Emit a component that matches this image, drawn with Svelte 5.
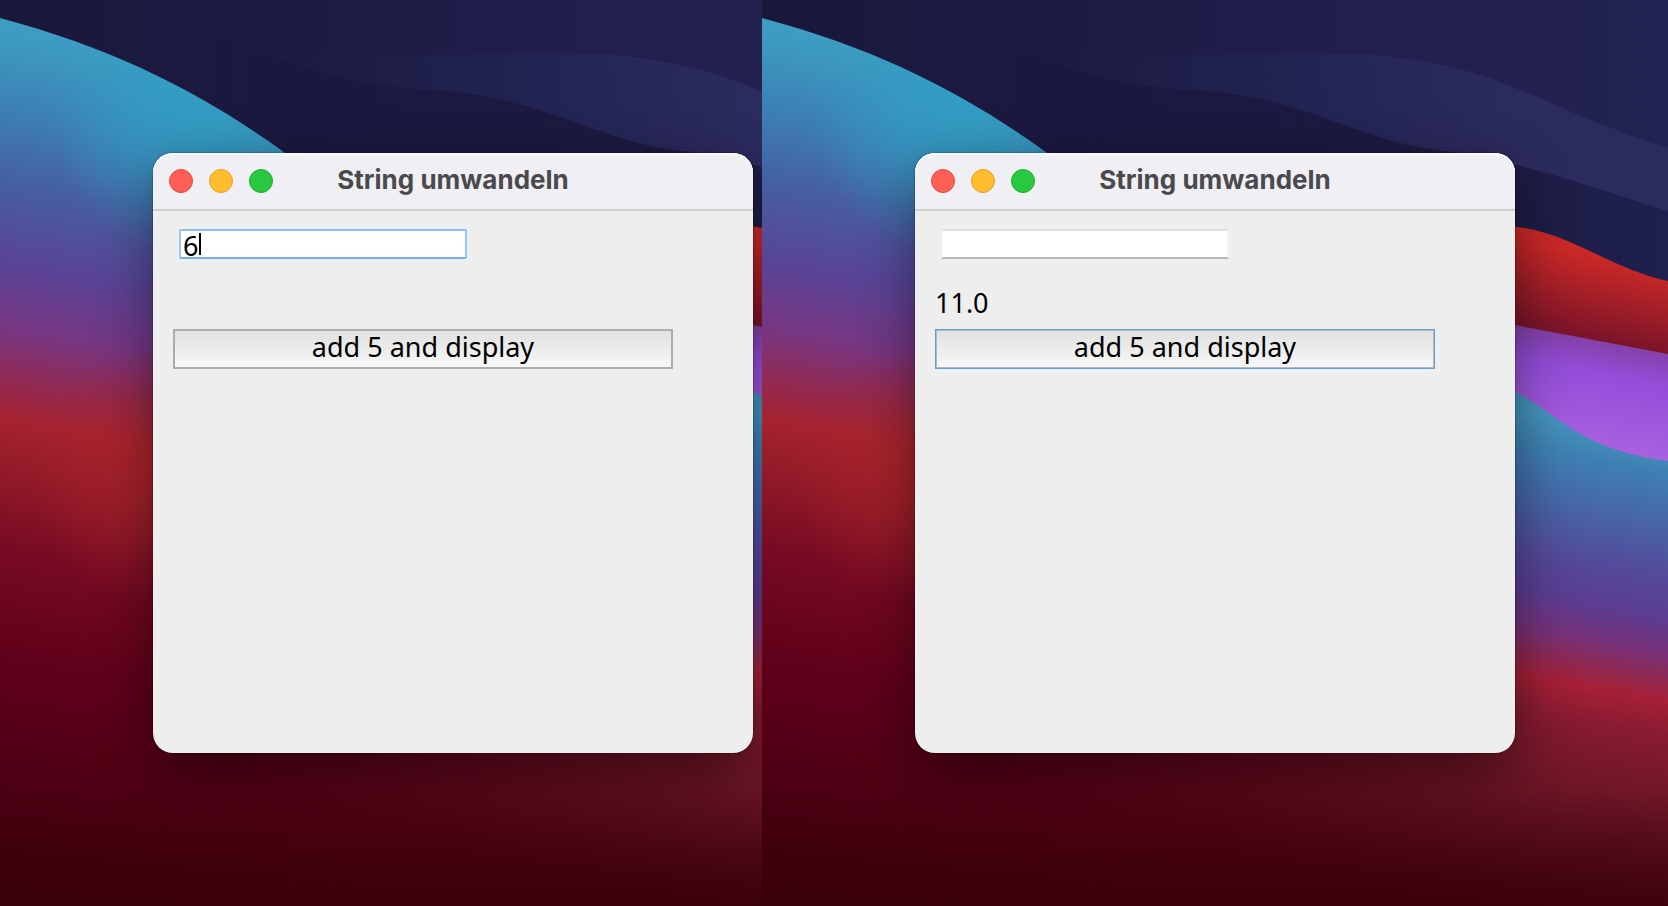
<script>
  let panes = $state([
    { id: 'before', value: '6', result: '', active: 'field' },
    { id: 'after', value: '', result: '11.0', active: 'button' }
  ]);

  function addFive(pane) {
    const number = parseFloat(pane.value);
    if (Number.isNaN(number)) return;
    pane.result = (number + 5).toFixed(1);
    pane.value = '';
    pane.active = 'button';
  }
</script>

{#snippet wallpaper(id)}
  <svg class="wallpaper" viewBox="0 0 906 906" preserveAspectRatio="xMinYMin slice" aria-hidden="true">
    <defs>
      <linearGradient id="{id}-sky" x1="0" y1="0" x2="1" y2="0">
        <stop offset="0" stop-color="#19183b" />
        <stop offset="0.3" stop-color="#1c1a42" />
        <stop offset="0.65" stop-color="#221e4e" />
        <stop offset="1" stop-color="#222352" />
      </linearGradient>
      <linearGradient id="{id}-crest" gradientUnits="userSpaceOnUse" x1="310" y1="100" x2="730" y2="20">
        <stop offset="0" stop-color="#1d1e48" stop-opacity="0" />
        <stop offset="0.3" stop-color="#1f204b" />
        <stop offset="0.6" stop-color="#242455" />
        <stop offset="1" stop-color="#2c2b5e" />
      </linearGradient>
      <linearGradient id="{id}-deep" gradientUnits="userSpaceOnUse" x1="150" y1="0" x2="906" y2="0">
        <stop offset="0" stop-color="#1a183d" stop-opacity="0" />
        <stop offset="0.2" stop-color="#1a183f" />
        <stop offset="0.7" stop-color="#1b1b40" />
        <stop offset="1" stop-color="#20204f" />
      </linearGradient>
      <linearGradient id="{id}-left" gradientUnits="userSpaceOnUse" x1="0" y1="0" x2="-160" y2="880">
        <stop offset="0" stop-color="#3fa1c8" />
        <stop offset="0.05" stop-color="#3d98c0" />
        <stop offset="0.12" stop-color="#3c80b4" />
        <stop offset="0.2" stop-color="#465fa2" />
        <stop offset="0.29" stop-color="#5a4395" />
        <stop offset="0.36" stop-color="#773682" />
        <stop offset="0.42" stop-color="#93294f" />
        <stop offset="0.46" stop-color="#a6232f" />
        <stop offset="0.52" stop-color="#921a28" />
        <stop offset="0.6" stop-color="#780b23" />
        <stop offset="0.73" stop-color="#5f001a" />
        <stop offset="0.88" stop-color="#4a0012" />
        <stop offset="1" stop-color="#3a000c" />
      </linearGradient>
      <radialGradient id="{id}-glow" gradientUnits="userSpaceOnUse" cx="200" cy="110" r="150">
        <stop offset="0" stop-color="#329dc3" stop-opacity="0.95" />
        <stop offset="0.4" stop-color="#329dc3" stop-opacity="0.7" />
        <stop offset="1" stop-color="#329dc3" stop-opacity="0" />
      </radialGradient>
      <radialGradient id="{id}-ember" gradientUnits="userSpaceOnUse" cx="160" cy="475" r="130">
        <stop offset="0" stop-color="#b3262a" stop-opacity="0.65" />
        <stop offset="0.5" stop-color="#ac252a" stop-opacity="0.35" />
        <stop offset="1" stop-color="#a8242a" stop-opacity="0" />
      </radialGradient>
      <linearGradient id="{id}-red" gradientUnits="userSpaceOnUse" x1="860" y1="262" x2="842" y2="346">
        <stop offset="0" stop-color="#cb2827" />
        <stop offset="0.5" stop-color="#a01e27" />
        <stop offset="1" stop-color="#76132a" />
      </linearGradient>
      <linearGradient id="{id}-violet" gradientUnits="userSpaceOnUse" x1="846" y1="341" x2="826" y2="450">
        <stop offset="0" stop-color="#8440a6" />
        <stop offset="0.3" stop-color="#934dd9" />
        <stop offset="1" stop-color="#aa62e0" />
      </linearGradient>
      <linearGradient id="{id}-right" gradientUnits="userSpaceOnUse" x1="830" y1="425" x2="742" y2="905">
        <stop offset="0" stop-color="#4594bd" />
        <stop offset="0.07" stop-color="#3e80b3" />
        <stop offset="0.17" stop-color="#4766a8" />
        <stop offset="0.28" stop-color="#54499a" />
        <stop offset="0.36" stop-color="#5b3d91" />
        <stop offset="0.43" stop-color="#77327b" />
        <stop offset="0.49" stop-color="#90284f" />
        <stop offset="0.53" stop-color="#a62036" />
        <stop offset="0.6" stop-color="#881b31" />
        <stop offset="0.73" stop-color="#6f1627" />
        <stop offset="0.88" stop-color="#580e1c" />
        <stop offset="1" stop-color="#45030f" />
      </linearGradient>
      <linearGradient id="{id}-fade" gradientUnits="userSpaceOnUse" x1="200" y1="0" x2="740" y2="0">
        <stop offset="0" stop-color="#000" />
        <stop offset="1" stop-color="#fff" />
      </linearGradient>
      <mask id="{id}-mask" maskUnits="userSpaceOnUse" x="0" y="0" width="906" height="906">
        <rect width="906" height="906" fill="url(#{id}-fade)" />
      </mask>
      <linearGradient id="{id}-floor" x1="0" y1="0" x2="0" y2="1">
        <stop offset="0" stop-color="#380009" stop-opacity="0" />
        <stop offset="1" stop-color="#380009" stop-opacity="0.7" />
      </linearGradient>
    </defs>
    <rect width="906" height="906" fill="url(#{id}-sky)" />
    <path fill="url(#{id}-crest)" d="M300 54C400 58 480 53 560 53C720 53 780 106 855 130Q880 141 906 147V260H300Z" />
    <path fill="url(#{id}-deep)" d="M150 20C220 26 260 58 330 75C380 87 410 89 445 91C540 99 590 135 661 148C760 160 830 187 906 211V400H150Z" />
    <path fill="url(#{id}-left)" d="M0 18C120 50 206 96 285 153L500 400H906V906H0Z" />
    <path fill="url(#{id}-glow)" d="M0 18C120 50 206 96 285 153L400 300H0Z" />
    <rect y="340" width="300" height="270" fill="url(#{id}-ember)" />
    <path fill="url(#{id}-red)" d="M500 226H740C800 226 845 268 906 281V380H500Z" />
    <path fill="url(#{id}-violet)" d="M500 310L753 325L906 354V500H500Z" />
    <path fill="url(#{id}-right)" mask="url(#{id}-mask)" d="M0 753H300L600 370H700L753 392C795 412 815 449 906 461V906H0Z" />
    <rect y="790" width="906" height="116" fill="url(#{id}-floor)" />
  </svg>
{/snippet}

<main class="desktops">
  {#each panes as pane (pane.id)}
    <section class="desktop">
      {@render wallpaper(pane.id)}
      <article class="window">
        <header class="titlebar">
          <div class="lights">
            <button class="light close" aria-label="Close"></button>
            <button class="light minimize" aria-label="Minimize"></button>
            <button class="light zoom" aria-label="Zoom"></button>
          </div>
          <h1>String umwandeln</h1>
        </header>
        <form onsubmit={(event) => { event.preventDefault(); addFive(pane); }}>
          <div class="field" class:active={pane.active === 'field'}>
            <input type="text" aria-label="Number" autocomplete="off" bind:value={pane.value} onfocus={() => (pane.active = 'field')} />
            {#if pane.active === 'field'}<span class="caret"></span>{/if}
          </div>
          <output>{pane.result}</output>
          <button class="submit" class:active={pane.active === 'button'} type="submit">add 5 and display</button>
        </form>
      </article>
    </section>
  {/each}
</main>

<style>
  :global(body) {
    margin: 0;
    background: #1c1a40;
  }

  .desktops {
    display: grid;
    grid-template-columns: 762fr 906fr;
    min-height: 100vh;
    font-family: "Noto Sans", "Open Sans", sans-serif;
    color: #000;
  }

  .desktop {
    position: relative;
    box-sizing: border-box;
    padding: 153px 0 153px 153px;
    overflow: hidden;
  }

  .wallpaper {
    position: absolute;
    inset: 0;
    width: 100%;
    height: 100%;
  }

  .window {
    position: relative;
    width: 600px;
    min-height: 600px;
    border-radius: 20px;
    background: #eeeeee;
    box-shadow: 0 0 2px rgba(0, 0, 0, 0.6), 0 20px 56px rgba(0, 0, 0, 0.45);
  }

  .titlebar {
    display: grid;
    grid-template-columns: 1fr auto 1fr;
    align-items: center;
    box-sizing: border-box;
    height: 58px;
    padding: 0 16px;
    border-bottom: 2px solid #cfced2;
    border-radius: 20px 20px 0 0;
    background: #f0eff4;
    box-shadow: inset 0 2px 0 #f9f9fb;
  }

  .lights {
    display: flex;
    gap: 16px;
  }

  .light {
    width: 24px;
    height: 24px;
    padding: 0;
    border: 1px solid;
    border-radius: 50%;
  }

  .close {
    background: #ff5f57;
    border-color: #e24b41;
  }

  .minimize {
    background: #febc2e;
    border-color: #e1a325;
  }

  .zoom {
    background: #28c840;
    border-color: #1dad2c;
  }

  h1 {
    margin: 0;
    padding-bottom: 2px;
    font: 700 26px/32px Inter, sans-serif;
    color: #4a494b;
  }

  form {
    display: flex;
    flex-direction: column;
    padding: 18px 20px;
  }

  .field {
    position: relative;
    width: 288px;
    height: 30px;
    margin-left: 6px;
  }

  input {
    display: block;
    box-sizing: border-box;
    width: 100%;
    height: 100%;
    padding: 2px 2px 0;
    border: 2px solid;
    border-color: #dedede #f4f4f4 #b9b9b9;
    outline: none;
    background: #fff;
    font: inherit;
    font-size: 27px;
    line-height: 24px;
    color: #000;
    caret-color: transparent;
  }

  .active input {
    border-color: #8ac2f7 #93c9fb #72b0ee;
    border-radius: 2px;
  }

  .caret {
    position: absolute;
    top: 4px;
    left: 20px;
    width: 2px;
    height: 22px;
    background: #000;
  }

  output {
    display: flex;
    align-items: center;
    height: 52px;
    margin-top: 18px;
    font-size: 27px;
    line-height: 32px;
  }

  .submit {
    box-sizing: border-box;
    width: 500px;
    height: 40px;
    padding: 0 0 4px;
    border: 2px solid #adadad;
    background: linear-gradient(#e1e1e1, #f7f7f7);
    font: inherit;
    font-size: 27px;
    line-height: 32px;
    color: #000;
  }

  .submit.active {
    border: 1px solid #5f9fdb;
    box-shadow: inset 0 0 0 1px #b4b8bd;
  }
</style>
